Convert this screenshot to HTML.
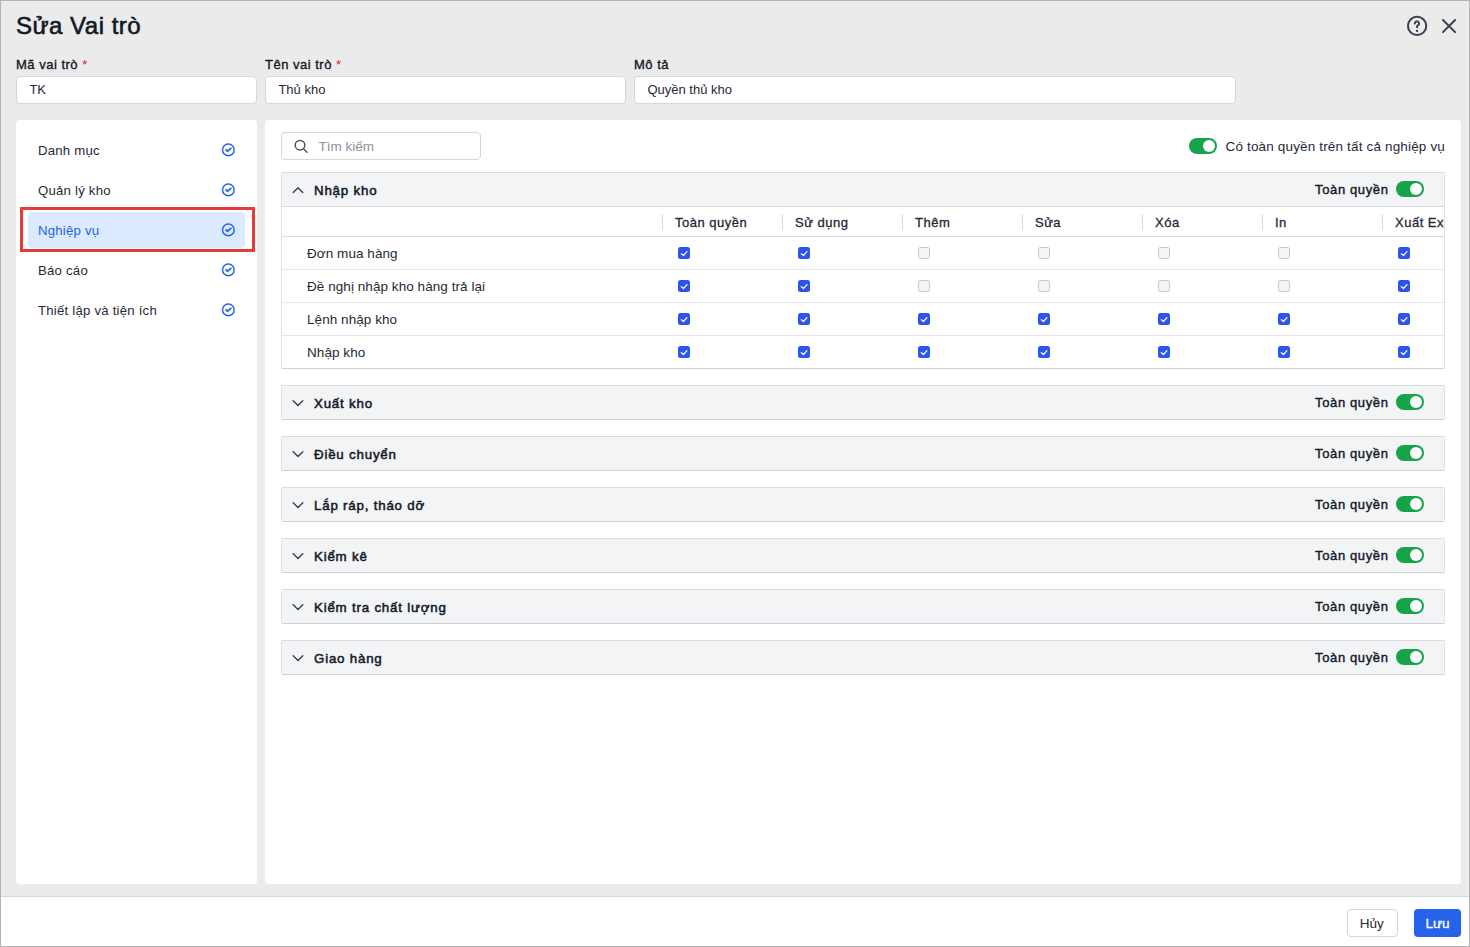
<!DOCTYPE html>
<html lang="vi">
<head>
<meta charset="utf-8">
<title>Sửa Vai trò</title>
<style>
*{box-sizing:border-box;margin:0;padding:0}
html,body{width:1470px;height:947px;overflow:hidden;background:#ebebeb}
body{font-family:"Liberation Sans",Arial,sans-serif;font-size:13px;color:#1f2937;position:relative}
.frame{position:absolute;left:0;top:0;width:1470px;height:947px;border:1px solid #b4b4b4;pointer-events:none;z-index:50}
.abs{position:absolute}
h1{position:absolute;left:16px;top:11px;font-size:24px;line-height:30px;font-weight:400;color:#111827;-webkit-text-stroke:0.6px #111827;letter-spacing:0.5px;white-space:nowrap}
.lbl{position:absolute;top:57px;letter-spacing:0.5px;height:16px;line-height:16px;font-size:13px;font-weight:400;color:#111827;-webkit-text-stroke:0.35px #111827;white-space:nowrap}
.lbl i{font-style:normal;color:#dc2626;-webkit-text-stroke:0}
.inp{position:absolute;top:76px;height:28px;background:#fff;border:1px solid #d4d7dc;border-radius:4px;line-height:26px;padding-left:12.4px;font-size:13px;color:#1f2937;white-space:nowrap}
.panel{position:absolute;top:120px;height:764px;background:#fff;border-radius:4px}
.side{left:16px;width:241px}
.main{left:265px;width:1196px}
.item{position:absolute;left:12px;width:217px;height:36px;border-radius:4px;line-height:36px;padding-top:1px;padding-left:10px;letter-spacing:0.22px;font-size:13.2px;color:#1f2937;white-space:nowrap}
.item.sel{background:#dbeafe;color:#2563eb}
.item svg{position:absolute;right:9px;top:10px;width:16px;height:16px}
.redbox{position:absolute;left:4px;top:87px;width:235px;height:45px;border:3px solid #e53e3a}
.search{position:absolute;left:16px;top:12px;width:200px;height:28px;border:1px solid #d4d7dc;border-radius:4px;background:#fff}
.search span{position:absolute;left:36.6px;top:1px;line-height:26px;font-size:13.5px;color:#8b919c}
.search svg{position:absolute;left:10.6px;top:5px;width:16px;height:16px}
.tog{position:absolute;width:28px;height:16px;border-radius:8px;background:#16a34a}
.tog:after{content:"";position:absolute;right:2px;top:2px;width:12px;height:12px;border-radius:50%;background:#fff}
.alltxt{position:absolute;left:960.5px;top:18px;letter-spacing:0.16px;line-height:18px;font-size:13.5px;color:#1f2937;white-space:nowrap}
.sec{position:absolute;left:16px;width:1164px;border:1px solid #dfe1e5;border-top-color:#dadce0;border-bottom-color:#cdd0d5;border-radius:2px;background:#fff;overflow:hidden}
.sh{position:relative;height:33px;background:#f3f4f6}
.sh b{position:absolute;left:32px;top:1px;line-height:33px;font-size:13.3px;letter-spacing:0.8px;font-weight:400;color:#111827;-webkit-text-stroke:0.5px #111827;white-space:nowrap}
.sh em{position:absolute;right:55.5px;top:1px;line-height:32px;letter-spacing:0.62px;font-style:normal;font-size:13px;color:#111827;-webkit-text-stroke:0.4px #111827;white-space:nowrap}
.sh .tog{right:20px;top:8px}
.sh svg{position:absolute;left:9px;top:10px;width:14px;height:14px}

.th{position:relative;height:31px;border-top:1px solid #d9dbdf;border-bottom:1px solid #d9dbdf;background:#fff}
.th span{position:absolute;top:1px;line-height:29px;letter-spacing:0.5px;font-size:13px;color:#1f2937;-webkit-text-stroke:0.3px #1f2937;white-space:nowrap}
.th i{position:absolute;top:7px;width:1px;height:16px;background:#d4d7dc}
.tr{position:relative;height:33px;border-bottom:1px solid #e5e7eb;background:#fff}
.tr:last-child{border-bottom:0;height:32px}
.tr span{position:absolute;left:25px;top:0;line-height:33px;letter-spacing:0.06px;font-size:13.5px;color:#1f2937;white-space:nowrap}
.cb{position:absolute;top:10px;width:12px;height:12px;border-radius:2.5px;background:#2f54eb}
.cb svg{position:absolute;left:0;top:0;width:12px;height:12px}
.cb.off{background:#f3f4f6;border:1px solid #c2c6cd}
</style>
</head>
<body>
<h1>Sửa Vai trò</h1>
<svg class="abs" style="left:1405px;top:14px" width="24" height="24" viewBox="0 0 24 24" fill="none" stroke="#374151" stroke-width="2" stroke-linecap="round" stroke-linejoin="round"><circle cx="12.1" cy="11.9" r="9.15"/><path d="M9.85 9.45a2.1 2.1 0 1 1 3.3 1.7c-.75.5-1.15.95-1.15 1.75v.45"/><circle cx="12" cy="16.9" r="1.15" fill="#374151" stroke="none"/></svg>
<svg class="abs" style="left:1437px;top:14px" width="24" height="24" viewBox="0 0 24 24" fill="none" stroke="#374151" stroke-width="2" stroke-linecap="round"><path d="M6 6l12.1 12.1M18.1 6L6 18.1"/></svg>

<div class="lbl" style="left:16px">Mã vai trò <i>*</i></div>
<div class="lbl" style="left:265px">Tên vai trò <i>*</i></div>
<div class="lbl" style="left:634px">Mô tả</div>
<div class="inp" style="left:16px;width:241px">TK</div>
<div class="inp" style="left:265px;width:361px">Thủ kho</div>
<div class="inp" style="left:634px;width:602px">Quyền thủ kho</div>

<div class="panel side" id="side">
<div class="item" style="top:12px">Danh mục<svg viewBox="0 0 16 16" fill="none" stroke="#2563eb" stroke-width="1.5" stroke-linecap="round" stroke-linejoin="round"><circle cx="8.35" cy="7.9" r="5.8"/><path stroke-width="1.8" d="M6.1 7.95l1.45 1.35 3.3-2.9"/></svg></div>
<div class="item" style="top:52px">Quản lý kho<svg viewBox="0 0 16 16" fill="none" stroke="#2563eb" stroke-width="1.5" stroke-linecap="round" stroke-linejoin="round"><circle cx="8.35" cy="7.9" r="5.8"/><path stroke-width="1.8" d="M6.1 7.95l1.45 1.35 3.3-2.9"/></svg></div>
<div class="item sel" style="top:92px">Nghiệp vụ<svg viewBox="0 0 16 16" fill="none" stroke="#2563eb" stroke-width="1.5" stroke-linecap="round" stroke-linejoin="round"><circle cx="8.35" cy="7.9" r="5.8"/><path stroke-width="1.8" d="M6.1 7.95l1.45 1.35 3.3-2.9"/></svg></div>
<div class="item" style="top:132px">Báo cáo<svg viewBox="0 0 16 16" fill="none" stroke="#2563eb" stroke-width="1.5" stroke-linecap="round" stroke-linejoin="round"><circle cx="8.35" cy="7.9" r="5.8"/><path stroke-width="1.8" d="M6.1 7.95l1.45 1.35 3.3-2.9"/></svg></div>
<div class="item" style="top:172px">Thiết lập và tiện ích<svg viewBox="0 0 16 16" fill="none" stroke="#2563eb" stroke-width="1.5" stroke-linecap="round" stroke-linejoin="round"><circle cx="8.35" cy="7.9" r="5.8"/><path stroke-width="1.8" d="M6.1 7.95l1.45 1.35 3.3-2.9"/></svg></div>
<div class="redbox"></div>
</div>
<div class="panel main" id="main">
<div class="search"><svg viewBox="0 0 16 16" fill="none" stroke="#4b5563" stroke-width="1.5" stroke-linecap="round"><circle cx="7" cy="7.2" r="4.8"/><path d="M10.6 10.8l3.4 3.4"/></svg><span>Tìm kiếm</span></div>
<div class="tog" style="left:924px;top:18px"></div><div class="alltxt">Có toàn quyền trên tất cả nghiệp vụ</div>
<div class="sec" style="top:52px"><div class="sh"><svg viewBox="0 0 14 14" fill="none" stroke="#374151" stroke-width="1.4" stroke-linecap="round" stroke-linejoin="round"><path d="M2.2 9.6L7 4.8l4.8 4.8"/></svg><b>Nhập kho</b><em>Toàn quyền</em><div class="tog"></div></div>
<div class="th"><i style="left:380px"></i><span style="left:393px">Toàn quyền</span><i style="left:500px"></i><span style="left:513px">Sử dụng</span><i style="left:620px"></i><span style="left:633px">Thêm</span><i style="left:740px"></i><span style="left:753px">Sửa</span><i style="left:860px"></i><span style="left:873px">Xóa</span><i style="left:980px"></i><span style="left:993px">In</span><i style="left:1100px"></i><span style="left:1113px">Xuất Excel</span></div>
<div class="tr"><span>Đơn mua hàng</span><div class="cb" style="left:396px"><svg viewBox="0 0 12 12" fill="none" stroke="#fff" stroke-width="1.2" stroke-linecap="round" stroke-linejoin="round"><path d="M3.2 6.6l2.2 1.9 3.6-3.9"/></svg></div><div class="cb" style="left:516px"><svg viewBox="0 0 12 12" fill="none" stroke="#fff" stroke-width="1.2" stroke-linecap="round" stroke-linejoin="round"><path d="M3.2 6.6l2.2 1.9 3.6-3.9"/></svg></div><div class="cb off" style="left:636px"></div><div class="cb off" style="left:756px"></div><div class="cb off" style="left:876px"></div><div class="cb off" style="left:996px"></div><div class="cb" style="left:1116px"><svg viewBox="0 0 12 12" fill="none" stroke="#fff" stroke-width="1.2" stroke-linecap="round" stroke-linejoin="round"><path d="M3.2 6.6l2.2 1.9 3.6-3.9"/></svg></div></div>
<div class="tr"><span>Đề nghị nhập kho hàng trả lại</span><div class="cb" style="left:396px"><svg viewBox="0 0 12 12" fill="none" stroke="#fff" stroke-width="1.2" stroke-linecap="round" stroke-linejoin="round"><path d="M3.2 6.6l2.2 1.9 3.6-3.9"/></svg></div><div class="cb" style="left:516px"><svg viewBox="0 0 12 12" fill="none" stroke="#fff" stroke-width="1.2" stroke-linecap="round" stroke-linejoin="round"><path d="M3.2 6.6l2.2 1.9 3.6-3.9"/></svg></div><div class="cb off" style="left:636px"></div><div class="cb off" style="left:756px"></div><div class="cb off" style="left:876px"></div><div class="cb off" style="left:996px"></div><div class="cb" style="left:1116px"><svg viewBox="0 0 12 12" fill="none" stroke="#fff" stroke-width="1.2" stroke-linecap="round" stroke-linejoin="round"><path d="M3.2 6.6l2.2 1.9 3.6-3.9"/></svg></div></div>
<div class="tr"><span>Lệnh nhập kho</span><div class="cb" style="left:396px"><svg viewBox="0 0 12 12" fill="none" stroke="#fff" stroke-width="1.2" stroke-linecap="round" stroke-linejoin="round"><path d="M3.2 6.6l2.2 1.9 3.6-3.9"/></svg></div><div class="cb" style="left:516px"><svg viewBox="0 0 12 12" fill="none" stroke="#fff" stroke-width="1.2" stroke-linecap="round" stroke-linejoin="round"><path d="M3.2 6.6l2.2 1.9 3.6-3.9"/></svg></div><div class="cb" style="left:636px"><svg viewBox="0 0 12 12" fill="none" stroke="#fff" stroke-width="1.2" stroke-linecap="round" stroke-linejoin="round"><path d="M3.2 6.6l2.2 1.9 3.6-3.9"/></svg></div><div class="cb" style="left:756px"><svg viewBox="0 0 12 12" fill="none" stroke="#fff" stroke-width="1.2" stroke-linecap="round" stroke-linejoin="round"><path d="M3.2 6.6l2.2 1.9 3.6-3.9"/></svg></div><div class="cb" style="left:876px"><svg viewBox="0 0 12 12" fill="none" stroke="#fff" stroke-width="1.2" stroke-linecap="round" stroke-linejoin="round"><path d="M3.2 6.6l2.2 1.9 3.6-3.9"/></svg></div><div class="cb" style="left:996px"><svg viewBox="0 0 12 12" fill="none" stroke="#fff" stroke-width="1.2" stroke-linecap="round" stroke-linejoin="round"><path d="M3.2 6.6l2.2 1.9 3.6-3.9"/></svg></div><div class="cb" style="left:1116px"><svg viewBox="0 0 12 12" fill="none" stroke="#fff" stroke-width="1.2" stroke-linecap="round" stroke-linejoin="round"><path d="M3.2 6.6l2.2 1.9 3.6-3.9"/></svg></div></div>
<div class="tr"><span>Nhập kho</span><div class="cb" style="left:396px"><svg viewBox="0 0 12 12" fill="none" stroke="#fff" stroke-width="1.2" stroke-linecap="round" stroke-linejoin="round"><path d="M3.2 6.6l2.2 1.9 3.6-3.9"/></svg></div><div class="cb" style="left:516px"><svg viewBox="0 0 12 12" fill="none" stroke="#fff" stroke-width="1.2" stroke-linecap="round" stroke-linejoin="round"><path d="M3.2 6.6l2.2 1.9 3.6-3.9"/></svg></div><div class="cb" style="left:636px"><svg viewBox="0 0 12 12" fill="none" stroke="#fff" stroke-width="1.2" stroke-linecap="round" stroke-linejoin="round"><path d="M3.2 6.6l2.2 1.9 3.6-3.9"/></svg></div><div class="cb" style="left:756px"><svg viewBox="0 0 12 12" fill="none" stroke="#fff" stroke-width="1.2" stroke-linecap="round" stroke-linejoin="round"><path d="M3.2 6.6l2.2 1.9 3.6-3.9"/></svg></div><div class="cb" style="left:876px"><svg viewBox="0 0 12 12" fill="none" stroke="#fff" stroke-width="1.2" stroke-linecap="round" stroke-linejoin="round"><path d="M3.2 6.6l2.2 1.9 3.6-3.9"/></svg></div><div class="cb" style="left:996px"><svg viewBox="0 0 12 12" fill="none" stroke="#fff" stroke-width="1.2" stroke-linecap="round" stroke-linejoin="round"><path d="M3.2 6.6l2.2 1.9 3.6-3.9"/></svg></div><div class="cb" style="left:1116px"><svg viewBox="0 0 12 12" fill="none" stroke="#fff" stroke-width="1.2" stroke-linecap="round" stroke-linejoin="round"><path d="M3.2 6.6l2.2 1.9 3.6-3.9"/></svg></div></div></div>
<div class="sec" style="top:265px"><div class="sh"><svg viewBox="0 0 14 14" fill="none" stroke="#374151" stroke-width="1.4" stroke-linecap="round" stroke-linejoin="round"><path d="M2.2 4.8L7 9.6l4.8-4.8"/></svg><b>Xuất kho</b><em>Toàn quyền</em><div class="tog"></div></div></div>
<div class="sec" style="top:316px"><div class="sh"><svg viewBox="0 0 14 14" fill="none" stroke="#374151" stroke-width="1.4" stroke-linecap="round" stroke-linejoin="round"><path d="M2.2 4.8L7 9.6l4.8-4.8"/></svg><b>Điều chuyển</b><em>Toàn quyền</em><div class="tog"></div></div></div>
<div class="sec" style="top:367px"><div class="sh"><svg viewBox="0 0 14 14" fill="none" stroke="#374151" stroke-width="1.4" stroke-linecap="round" stroke-linejoin="round"><path d="M2.2 4.8L7 9.6l4.8-4.8"/></svg><b>Lắp ráp, tháo dỡ</b><em>Toàn quyền</em><div class="tog"></div></div></div>
<div class="sec" style="top:418px"><div class="sh"><svg viewBox="0 0 14 14" fill="none" stroke="#374151" stroke-width="1.4" stroke-linecap="round" stroke-linejoin="round"><path d="M2.2 4.8L7 9.6l4.8-4.8"/></svg><b>Kiểm kê</b><em>Toàn quyền</em><div class="tog"></div></div></div>
<div class="sec" style="top:469px"><div class="sh"><svg viewBox="0 0 14 14" fill="none" stroke="#374151" stroke-width="1.4" stroke-linecap="round" stroke-linejoin="round"><path d="M2.2 4.8L7 9.6l4.8-4.8"/></svg><b>Kiểm tra chất lượng</b><em>Toàn quyền</em><div class="tog"></div></div></div>
<div class="sec" style="top:520px"><div class="sh"><svg viewBox="0 0 14 14" fill="none" stroke="#374151" stroke-width="1.4" stroke-linecap="round" stroke-linejoin="round"><path d="M2.2 4.8L7 9.6l4.8-4.8"/></svg><b>Giao hàng</b><em>Toàn quyền</em><div class="tog"></div></div></div>
</div>

<div class="abs" style="left:0;top:896px;width:1470px;height:51px;background:#fff;border-top:1px solid #cfdcdc"></div>
<div class="abs" style="left:1347px;top:909px;width:51px;height:28px;border:1px solid #d4d7dc;border-radius:4px;background:#fff;text-align:center;padding-right:1.5px;line-height:27.5px;font-size:13.5px;color:#1f2937">Hủy</div>
<div class="abs" style="left:1414px;top:909px;width:47px;height:28px;border-radius:4px;background:#2563eb;text-align:center;line-height:29px;font-size:13.5px;color:#fff;-webkit-text-stroke:0.3px #fff">Lưu</div>
<div class="frame"></div>
</body>
</html>
